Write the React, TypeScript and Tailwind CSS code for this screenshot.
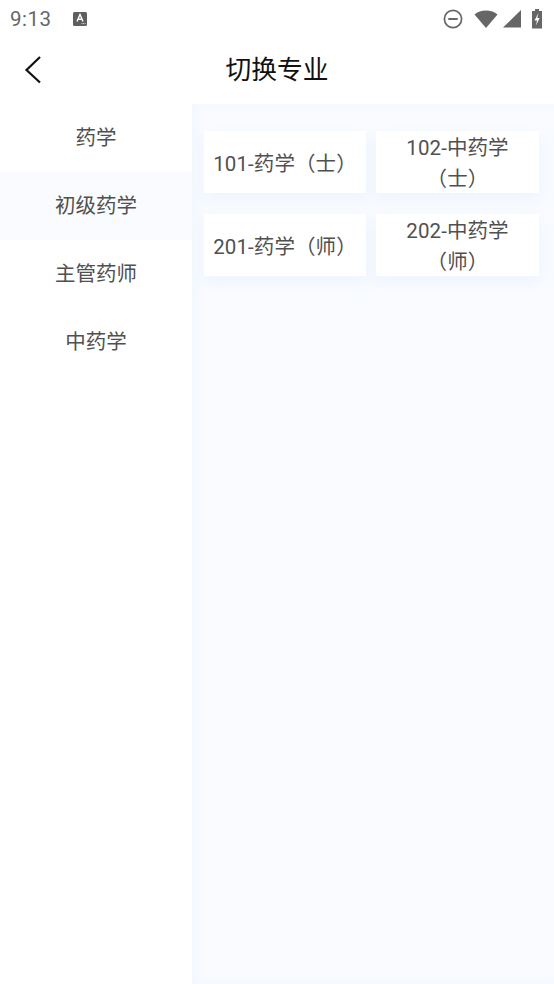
const font = { fontFamily: "Roboto, 'Noto Sans CJK SC', sans-serif" };

function StatusBar() {
  return (
    <div className="flex h-[38px] items-center justify-between pl-[10px] pr-[11px]">
      <div className="flex items-center gap-[20px]">
        <span className="text-[20.500px] leading-none tracking-[0.5px] text-[#666666]">9:13</span>
        <svg width="16" height="16" viewBox="0 0 16 16">
          <rect x="1" y="1" width="14" height="14" rx="1.500" fill="#5f5f5f" />
          <path d="M5 10.500 8 3.500l3 7M6 8.300h4" stroke="#fff" strokeWidth="1.400" fill="none" />
          <path d="M9.500 12.600h4" stroke="#ddd" strokeWidth="1" strokeDasharray="1 .6" />
        </svg>
      </div>
      <div className="flex items-center gap-[9px]">
        <svg width="20" height="20" viewBox="0 0 20 20">
          <circle cx="10" cy="10" r="8.600" fill="none" stroke="#666" strokeWidth="1.700" />
          <rect x="5.300" y="9" width="9.400" height="2" fill="#666" />
        </svg>
        <svg width="24" height="20" viewBox="0 0 24 20" className="ml-[2px]">
          <path d="M0.500 5.500C3.500 2.800 7.500 1.500 12 1.500s8.500 1.300 11.500 4L12 19z" fill="#666" />
        </svg>
        <svg width="18" height="20" viewBox="0 0 18 20" className="-ml-[4px]">
          <path d="M0 18.500 18 1v17.500z" fill="#666" />
        </svg>
        <svg width="12" height="22" viewBox="0 0 12 22" className="ml-[1px]">
          <path d="M4 1h4v2h3v17.500H1V3h3z" fill="#666" />
          <path d="M7.500 5 3.500 12.500h2.500l-1 5 3.700-7.500H6.300z" fill="#fff" />
        </svg>
      </div>
    </div>
  );
}

function Card({ children }: { children: React.ReactNode }) {
  return (
    <div className="flex h-[62px] items-center justify-center overflow-hidden bg-white px-[8px] pt-[4px] text-center text-[20.500px] leading-[31px] tracking-[0.1px] text-[#505050] shadow-[0_6px_14px_rgba(225,235,250,0.45)]">
      <span>{children}</span>
    </div>
  );
}

export default function App() {
  const menu = ["药学", "初级药学", "主管药师", "中药学"];
  return (
    <div className="flex h-[984px] w-[554px] flex-col overflow-hidden bg-white" style={font}>
      <StatusBar />
      <div className="relative flex h-[66px] items-center justify-center">
        <svg width="20" height="30" viewBox="0 0 20 30" className="absolute left-[23px] top-[17px]">
          <path d="M17 2 3.500 15 17 27.500" fill="none" stroke="#111" strokeWidth="2.200" />
        </svg>
        <span className="text-[25.750px] leading-none text-[#111111]">切换专业</span>
      </div>
      <div className="flex flex-1">
        <div className="w-[192px]">
          {menu.map((m, i) => (
            <div
              key={m}
              className={`flex h-[68px] items-center justify-center text-[20.500px] text-[#505050] ${i === 1 ? "bg-[#f9fbff]" : "bg-white"}`}
            >
              {m}
            </div>
          ))}
        </div>
        <div className="flex-1 bg-[#f9fbff] pl-[12px] pr-[15px] pt-[27px] shadow-[inset_5px_0_8px_rgba(238,245,254,0.6)]">
          <div className="grid grid-cols-[162px_163px] gap-x-[10px] gap-y-[21px]">
            <Card>101-药学（士）</Card>
            <Card>102-中药学（士）</Card>
            <Card>201-药学（师）</Card>
            <Card>202-中药学（师）</Card>
          </div>
        </div>
      </div>
    </div>
  );
}
